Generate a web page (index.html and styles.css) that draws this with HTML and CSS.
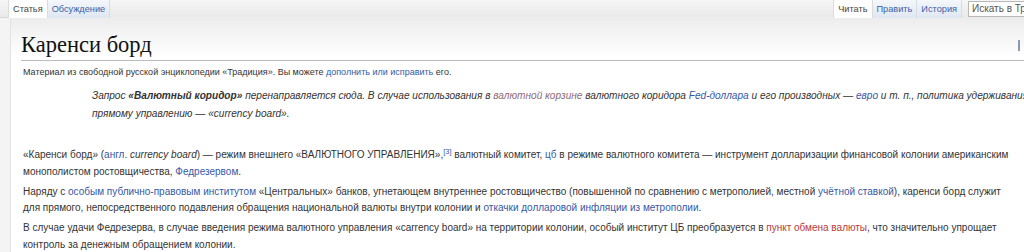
FILE: index.html
```html
<!DOCTYPE html>
<html lang="ru">
<head>
    <meta charset="UTF-8">
    <title>Каренси борд — Традиция</title>
    <link rel="stylesheet" href="styles.css">
</head>
<body>
    <!-- вкладки -->
    <div class="head">
        <div class="tabs">
            <span class="tab selected">Статья</span>
            <span class="tab">Обсуждение</span>
        </div>
        <div class="tabs right">
            <span class="tab selected">Читать</span>
            <span class="tab">Править</span>
            <span class="tab">История</span>
            <div class="search">Искать в Традиции</div>
        </div>
    </div>

    <div class="content">
        <div class="title-row">
            <h1 class="title">Каренси борд</h1>
            <span class="title-box"></span>
        </div>

        <div class="site-sub">Материал из свободной русской энциклопедии «Традиция». Вы можете <a href="#">дополнить или исправить</a> его.</div>

        <div class="hatnote">Запрос <b>«Валютный коридор»</b> перенаправляется сюда. В случае использования в <a href="#" class="visited">валютной корзине</a> валютного коридора <a href="#">Fed-доллара</a> и его производных — <a href="#">евро</a> и т. п., политика удерживания курса<br>прямому управлению — «currency board».</div>

        <div class="text">
            <p>«Каренси борд» (<a href="#">англ.</a> <i>currency board</i>) — режим внешнего «ВАЛЮТНОГО УПРАВЛЕНИЯ»,<sup><a href="#">[3]</a></sup> валютный комитет, <a href="#">цб</a> в режиме валютного комитета — инструмент долларизации финансовой колонии американским монополистом ростовщичества, <a href="#">Федрезервом</a>.</p>
            <p>Наряду с <a href="#">особым публично-правовым институтом</a> «Центральных» банков, угнетающем внутреннее ростовщичество (повышенной по сравнению с метрополией, местной <a href="#">учётной ставкой</a>), каренси борд служит для прямого, непосредственного подавления обращения национальной валюты внутри колонии и <a href="#">откачки долларовой инфляции из метрополии</a>.</p>
            <p>В случае удачи Федрезерва, в случае введения режима валютного управления «carrency board» на территории колонии, особый институт ЦБ преобразуется в <a href="#" class="new">пункт обмена валюты</a>, что значительно упрощает контроль за денежным обращением колонии.</p>
        </div>
    </div>
</body>
</html>
```

FILE: styles.css
```css
body {
    margin: 0;
    background-color: #f4f4f4;
    font-family: "Liberation Sans", Arial, sans-serif;
    color: #333;
    overflow: hidden;
    height: 252px;
}
a {
    color: #3659a5;
    text-decoration: none;
}
a.visited {
    color: #8d6b7a;
}
a.new {
    color: #b83a3a;
}
.head {
    height: 18px;
    display: flex;
    justify-content: space-between;
    background: linear-gradient(#f6f6f6, #e9e9e9);
    border-bottom: 1px solid #d6d6d6;
    box-sizing: border-box;
}
.tabs {
    display: flex;
    padding-left: 8px;
}
.tabs.right {
    padding-left: 0;
    margin-right: -15px;
}
.tab {
    font-size: 9.2px;
    line-height: 18px;
    height: 18px;
    padding: 0 4px;
    color: #3b5ea8;
    background: linear-gradient(#f4f7fb, #dfe7f1);
    border-right: 1px solid #d4dde8;
}
.tab.selected {
    color: #444;
    background: #fff;
    border-left: 1px solid #dcdcdc;
    border-right: 1px solid #dcdcdc;
}
.search {
    margin: 1px 0 0 6px;
    height: 14px;
    width: 66px;
    border: 1px solid #b8b8b8;
    background: #fff;
    font-size: 10px;
    line-height: 13px;
    padding-left: 3px;
    color: #555;
    white-space: nowrap;
    overflow: hidden;
}
.content {
    margin-left: 10px;
    margin-top: -1px;
    padding: 0 0 0 12px;
    border-left: 1px solid #e2e2e2;
    background: linear-gradient(#ececec, #fff 40px);
    height: 240px;
}
.title-row {
    display: flex;
    justify-content: space-between;
    align-items: flex-end;
    border-bottom: 1px solid #bcbcbc;
    padding-top: 13px;
    margin-left: -2px;
}
.title {
    margin: 0;
    font-family: "Liberation Serif", "Times New Roman", serif;
    font-weight: normal;
    font-size: 22.5px;
    line-height: 30px;
    color: #111;
}
.title-box {
    width: 4px;
    height: 11px;
    margin-bottom: 9px;
    border-left: 2px solid #8a9ab0;
}
.site-sub {
    font-size: 9px;
    line-height: 14px;
    margin-top: 4px;
}
.hatnote {
    font-style: italic;
    font-size: 10.1px;
    line-height: 18px;
    margin: 8px 0 0 69px;
    white-space: nowrap;
}
.text {
    margin-top: 24px;
    width: 989px;
}
.text p {
    font-size: 10px;
    line-height: 16.5px;
    margin: 0 0 3.5px;
}
sup {
    font-size: 7.5px;
    line-height: 1;
}
```
